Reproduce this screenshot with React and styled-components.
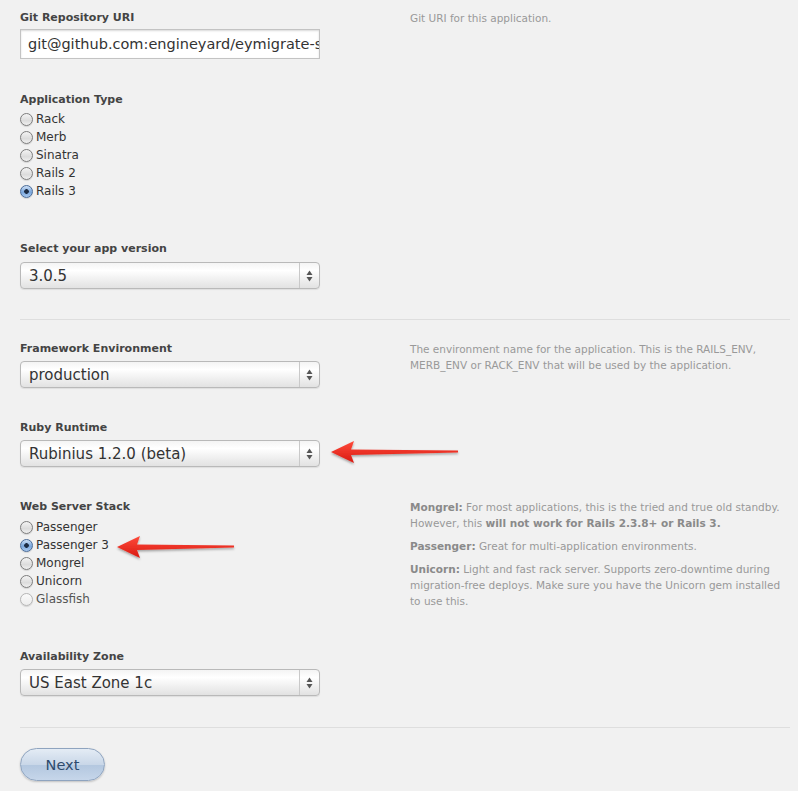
import React from "react";
import styled, { createGlobalStyle } from "styled-components";

const Global = createGlobalStyle`
  html, body { margin: 0; padding: 0; background: #f1f1f1; }
  body { font-family: "DejaVu Sans", "Liberation Sans", sans-serif; color: #333; }
`;

const Page = styled.div`
  padding: 9px 8px 10px 20px;
  background: #f1f1f1;
  min-height: 791px;
  box-sizing: border-box;
`;

const Row = styled.div`
  display: grid;
  grid-template-columns: 300px 1fr;
  column-gap: 90px;
  margin-bottom: ${(p) => p.$mb ?? 31}px;
`;

const Field = styled.div`
  position: relative;
  display: flex;
  flex-direction: column;
`;

const Label = styled.div`
  font-size: 11px;
  font-weight: bold;
  line-height: 16px;
  padding-top: 1px;
  color: #444;
  margin-bottom: ${(p) => (p.$gap ?? 5) - 1}px;
`;

const TextInput = styled.div`
  height: 30px;
  box-sizing: border-box;
  border: 1px solid #c3c3c3;
  background: #fff;
  box-shadow: inset 0 1px 2px rgba(0, 0, 0, 0.15);
  font-size: 14.5px;
  line-height: 28px;
  padding-left: 7px;
  color: #333;
  white-space: nowrap;
  overflow: hidden;
`;

const SelectBox = styled.div`
  height: 27px;
  box-sizing: border-box;
  display: flex;
  border: 1px solid #b9b9b9;
  border-radius: 4px;
  background: linear-gradient(#f4f4f4, #ffffff 30%, #ececec 75%, #e2e2e2);
  box-shadow: 0 1px 1px rgba(0, 0, 0, 0.08);
  overflow: hidden;
`;

const SelectValue = styled.div`
  flex: 1;
  font-size: 15px;
  line-height: 26px;
  padding-left: 8px;
  color: #333;
`;

const SelectArrows = styled.div`
  width: 19px;
  border-left: 1px solid #c9c9c9;
  display: flex;
  align-items: center;
  justify-content: center;
`;

const RadioList = styled.div`
  display: flex;
  flex-direction: column;
  padding-bottom: 9px;
`;

const RadioRow = styled.div`
  display: flex;
  align-items: center;
  height: 18px;
  gap: 3px;
  font-size: 12px;
  color: ${(p) => (p.$disabled ? "#555" : "#333")};
`;

const RadioDot = styled.span`
  width: 13px;
  height: 13px;
  box-sizing: border-box;
  border-radius: 50%;
  border: 1px solid ${(p) => (p.$checked ? "#4a6b98" : p.$disabled ? "#b5b5b5" : "#7d7d7d")};
  background: ${(p) =>
    p.$checked
      ? "radial-gradient(circle at 50% 50%, #1d2c44 0 2px, transparent 2.6px), linear-gradient(#cfe1f7, #79a6dc 55%, #a8c8ee)"
      : p.$disabled
      ? "linear-gradient(#fafafa, #ececec)"
      : "linear-gradient(#f3f3f3, #dcdcdc 60%, #f0f0f0)"};
  box-shadow: 0 1px 1px rgba(0, 0, 0, 0.12);
  flex-shrink: 0;
`;

const Help = styled.div`
  font-size: 10.5px;
  line-height: 16px;
  padding-top: 1px;
  color: #999;
  display: flex;
  flex-direction: column;
  gap: 7px;
  strong { color: #8a8a8a; }
`;

const Divider = styled.hr`
  border: none;
  border-top: 1px solid #dedede;
  margin: 0 0 20px 0;
`;

const NextButton = styled.button`
  width: 85px;
  height: 33px;
  border-radius: 17px;
  border: 1px solid #8fa4bf;
  background: linear-gradient(#e4ecf5, #c9d7e8 50%, #b3c7df 51%, #c6d6ea);
  box-shadow: 0 1px 2px rgba(0, 0, 0, 0.2);
  color: #2d4a6d;
  font-family: "DejaVu Sans", sans-serif;
  font-size: 14.5px;
  padding: 0;
  margin-top: 0;
`;

const ArrowMark = styled.svg`
  position: absolute;
  left: ${(p) => p.$left}px;
  top: ${(p) => p.$top}px;
  overflow: visible;
`;

const Arrow = ({ left, top, length }) => (
  <ArrowMark $left={left} $top={top} width={length} height="24" viewBox={`0 0 ${length} 24`}>
    <defs>
      <linearGradient id={`ag${length}`} x1="0" y1="0" x2="0" y2="1">
        <stop offset="0" stopColor="#ff4a3a" />
        <stop offset="1" stopColor="#d81a12" />
      </linearGradient>
      <filter id={`as${length}`} x="-10%" y="-40%" width="120%" height="180%">
        <feDropShadow dx="0" dy="1.5" stdDeviation="1.2" floodColor="#000" floodOpacity="0.35" />
      </filter>
    </defs>
    <path
      d={`M0 12 L23 1 L20 9.5 L${length} 10.6 L${length} 12.4 L20 15 L23 23 Z`}
      fill={`url(#ag${length})`}
      filter={`url(#as${length})`}
    />
  </ArrowMark>
);

const UpDown = () => (
  <svg width="7" height="12" viewBox="0 0 7 12">
    <path d="M3.5 0.5 L6.5 5 L0.5 5 Z" fill="#555" />
    <path d="M3.5 11.5 L6.5 7 L0.5 7 Z" fill="#555" />
  </svg>
);

const Select = ({ value }) => (
  <SelectBox>
    <SelectValue>{value}</SelectValue>
    <SelectArrows>
      <UpDown />
    </SelectArrows>
  </SelectBox>
);

const Radio = ({ label, checked, disabled }) => (
  <RadioRow $disabled={disabled}>
    <RadioDot $checked={checked} $disabled={disabled} />
    {label}
  </RadioRow>
);

export default function App() {
  return (
    <Page>
      <Global />
      <Row $mb={32}>
        <Field>
          <Label $gap={4}>Git Repository URI</Label>
          <TextInput>git@github.com:engineyard/eymigrate-sample</TextInput>
        </Field>
        <Help>Git URI for this application.</Help>
      </Row>

      <Row $mb={31}>
        <Field>
          <Label $gap={3}>Application Type</Label>
          <RadioList>
            <Radio label="Rack" />
            <Radio label="Merb" />
            <Radio label="Sinatra" />
            <Radio label="Rails 2" />
            <Radio label="Rails 3" checked />
          </RadioList>
        </Field>
        <div />
      </Row>

      <Row $mb={30}>
        <Field>
          <Label $gap={6}>Select your app version</Label>
          <Select value="3.0.5" />
        </Field>
        <div />
      </Row>

      <Divider />

      <Row>
        <Field>
          <Label>Framework Environment</Label>
          <Select value="production" />
        </Field>
        <Help>
          The environment name for the application. This is the RAILS_ENV,
          MERB_ENV or RACK_ENV that will be used by the application.
        </Help>
      </Row>

      <Row>
        <Field>
          <Label>Ruby Runtime</Label>
          <Select value="Rubinius 1.2.0 (beta)" />
          <Arrow left={311} top={21} length={127} />
        </Field>
        <div />
      </Row>

      <Row>
        <Field>
          <Label $gap={4}>Web Server Stack</Label>
          <RadioList>
            <Radio label="Passenger" />
            <Radio label="Passenger 3" checked />
            <Radio label="Mongrel" />
            <Radio label="Unicorn" />
            <Radio label="Glassfish" disabled />
          </RadioList>
          <Arrow left={97} top={37} length={117} />
        </Field>
        <Help>
          <div>
            <strong>Mongrel:</strong> For most applications, this is the tried and true old standby.
            However, this <strong>will not work for Rails 2.3.8+ or Rails 3.</strong>
          </div>
          <div>
            <strong>Passenger:</strong> Great for multi-application environments.
          </div>
          <div>
            <strong>Unicorn:</strong> Light and fast rack server. Supports zero-downtime during
            migration-free deploys. Make sure you have the Unicorn gem installed to use this.
          </div>
        </Help>
      </Row>

      <Row $mb={31}>
        <Field>
          <Label>Availability Zone</Label>
          <Select value="US East Zone 1c" />
        </Field>
        <div />
      </Row>

      <Divider />

      <NextButton>Next</NextButton>
    </Page>
  );
}
